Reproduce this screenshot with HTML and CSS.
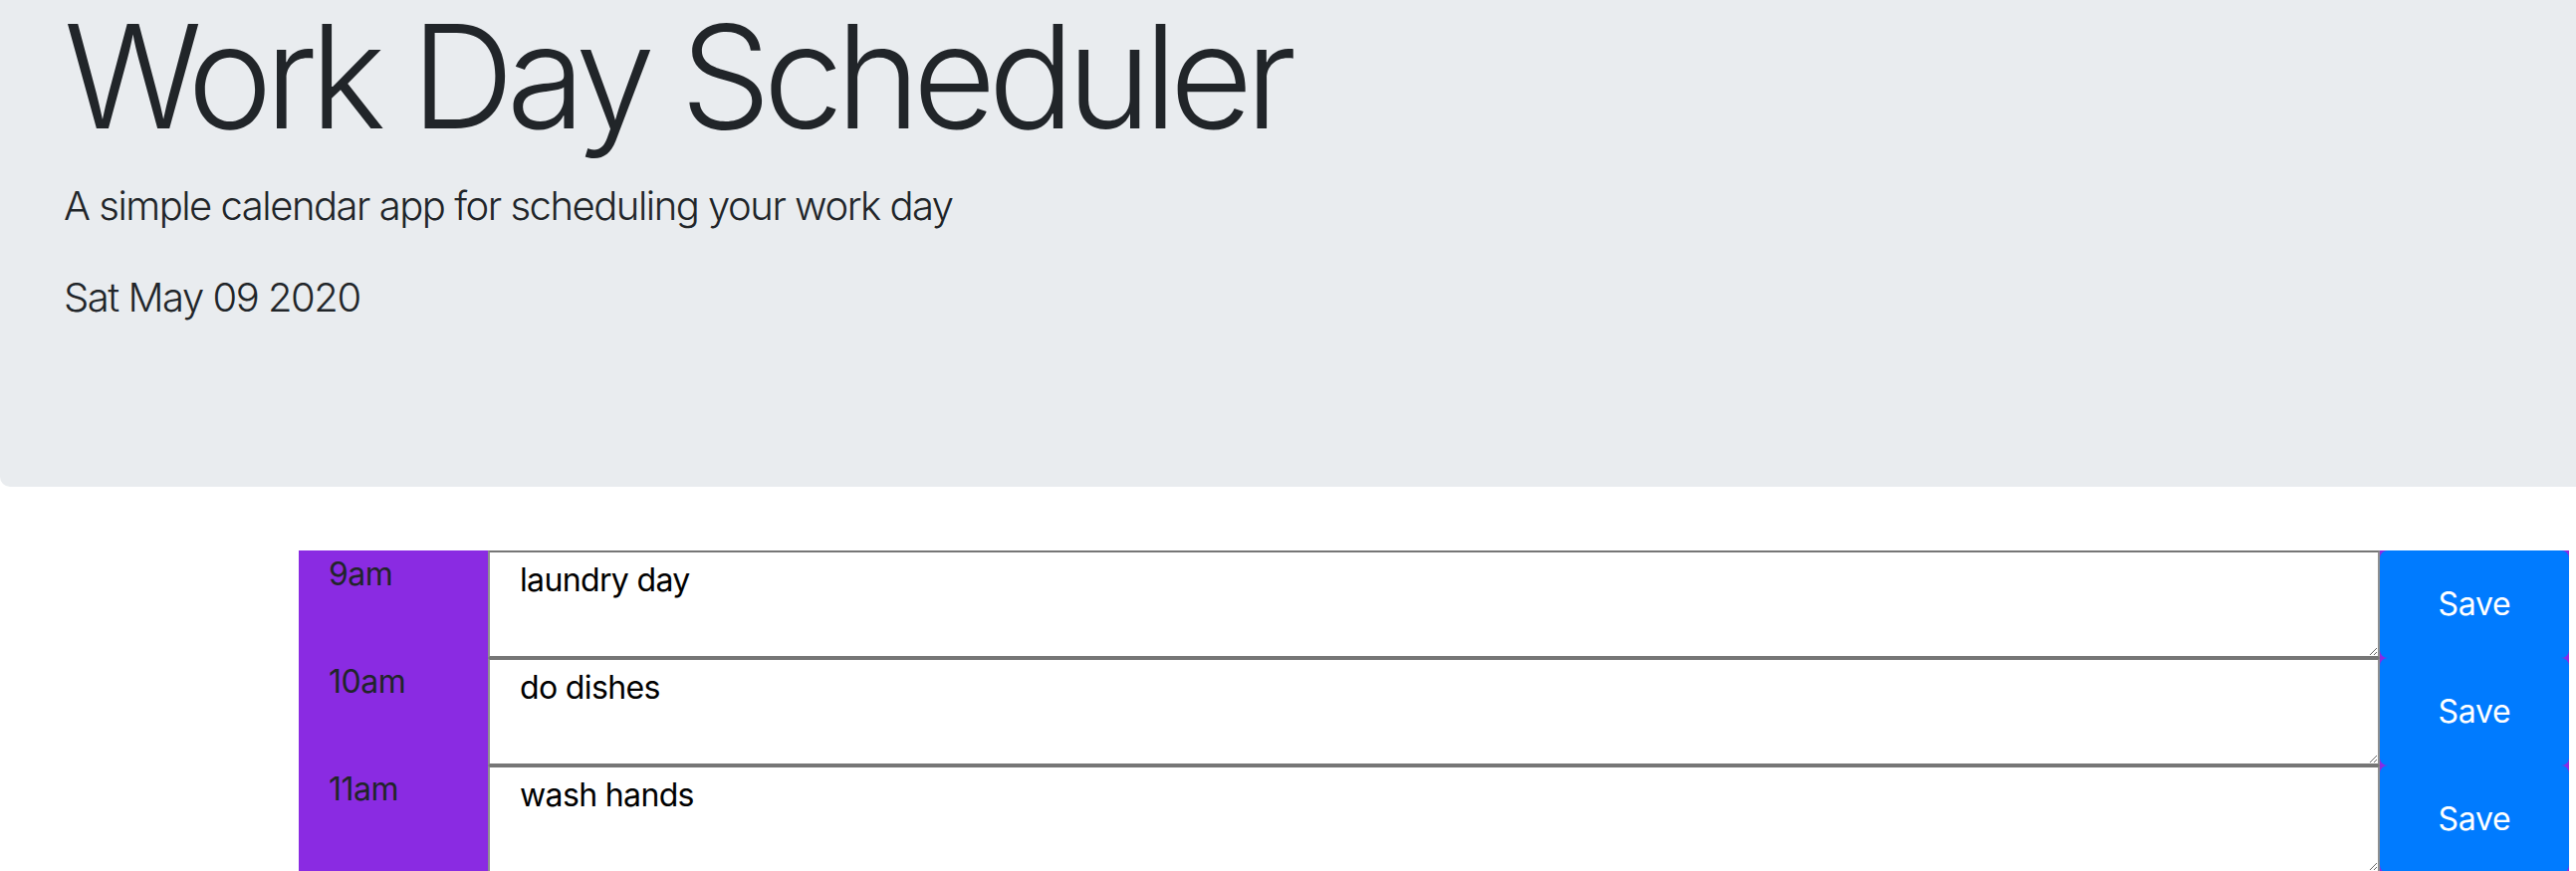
FILE: index.html
```html
<!DOCTYPE html>
<html lang="en">
<head>
<meta charset="utf-8">
<title>Work Day Scheduler</title>
<link rel="stylesheet" href="styles.css">
</head>
<body>
<header class="jumbotron">
  <h1 class="display-title">Work Day Scheduler</h1>
  <p class="lead">A simple calendar app for scheduling your work day</p>
  <p class="lead current-day">Sat May 09 2020</p>
</header>
<main class="schedule">
  <div class="time-block">
    <div class="hour">9am</div>
    <textarea class="description">laundry day</textarea>
    <button class="save-btn">Save</button>
  </div>
  <div class="time-block">
    <div class="hour">10am</div>
    <textarea class="description">do dishes</textarea>
    <button class="save-btn">Save</button>
  </div>
  <div class="time-block">
    <div class="hour">11am</div>
    <textarea class="description">wash hands</textarea>
    <button class="save-btn">Save</button>
  </div>
</main>
</body>
</html>
```
FILE: styles.css
```css
html, body {
  margin: 0;
  padding: 0;
  background: #ffffff;
}

body {
  font-family: Inter, "Liberation Sans", sans-serif;
  color: #212529;
  font-size: 32px;
  line-height: 1.5;
  height: 875px;
  overflow: hidden;
}

.jumbotron {
  background-color: #e9ecef;
  padding: 0 64px 128px;
  margin-bottom: 64px;
  border-radius: 0 0 0 10px;
}

.display-title {
  font-size: 144px;
  font-weight: 350;
  line-height: 154px;
  letter-spacing: -0.053em;
  margin: 0 0 23px;
}

.lead {
  font-size: 40px;
  font-weight: 350;
  line-height: 60px;
  letter-spacing: -0.037em;
  margin: 0 0 32px;
}

.schedule {
  margin-left: 300px;
  width: 2280px;
}

.time-block {
  display: grid;
  grid-template-columns: 190px 1900px 190px;
  height: 108px;
  background-color: #8a2be2;
}

.hour {
  padding: 0 30px;
  color: #212529;
  font-size: 32px;
  line-height: 48px;
  letter-spacing: -0.015em;
}

.description {
  box-sizing: border-box;
  height: 108px;
  margin: 0;
  padding: 4px 30px;
  border: 2px solid;
  border-color: #767676 #8f8f8f;
  background: #ffffff;
  color: #000000;
  font-family: inherit;
  font-size: 32px;
  line-height: 48px;
  letter-spacing: -0.02em;
}

.save-btn {
  display: flex;
  align-items: center;
  justify-content: center;
  margin: 0;
  padding: 0;
  height: 108px;
  border: 2px solid #007bff;
  border-radius: 8px;
  background-color: #007bff;
  color: #ffffff;
  font-family: inherit;
  font-size: 32px;
  line-height: 48px;
  letter-spacing: -0.01em;
}
```
